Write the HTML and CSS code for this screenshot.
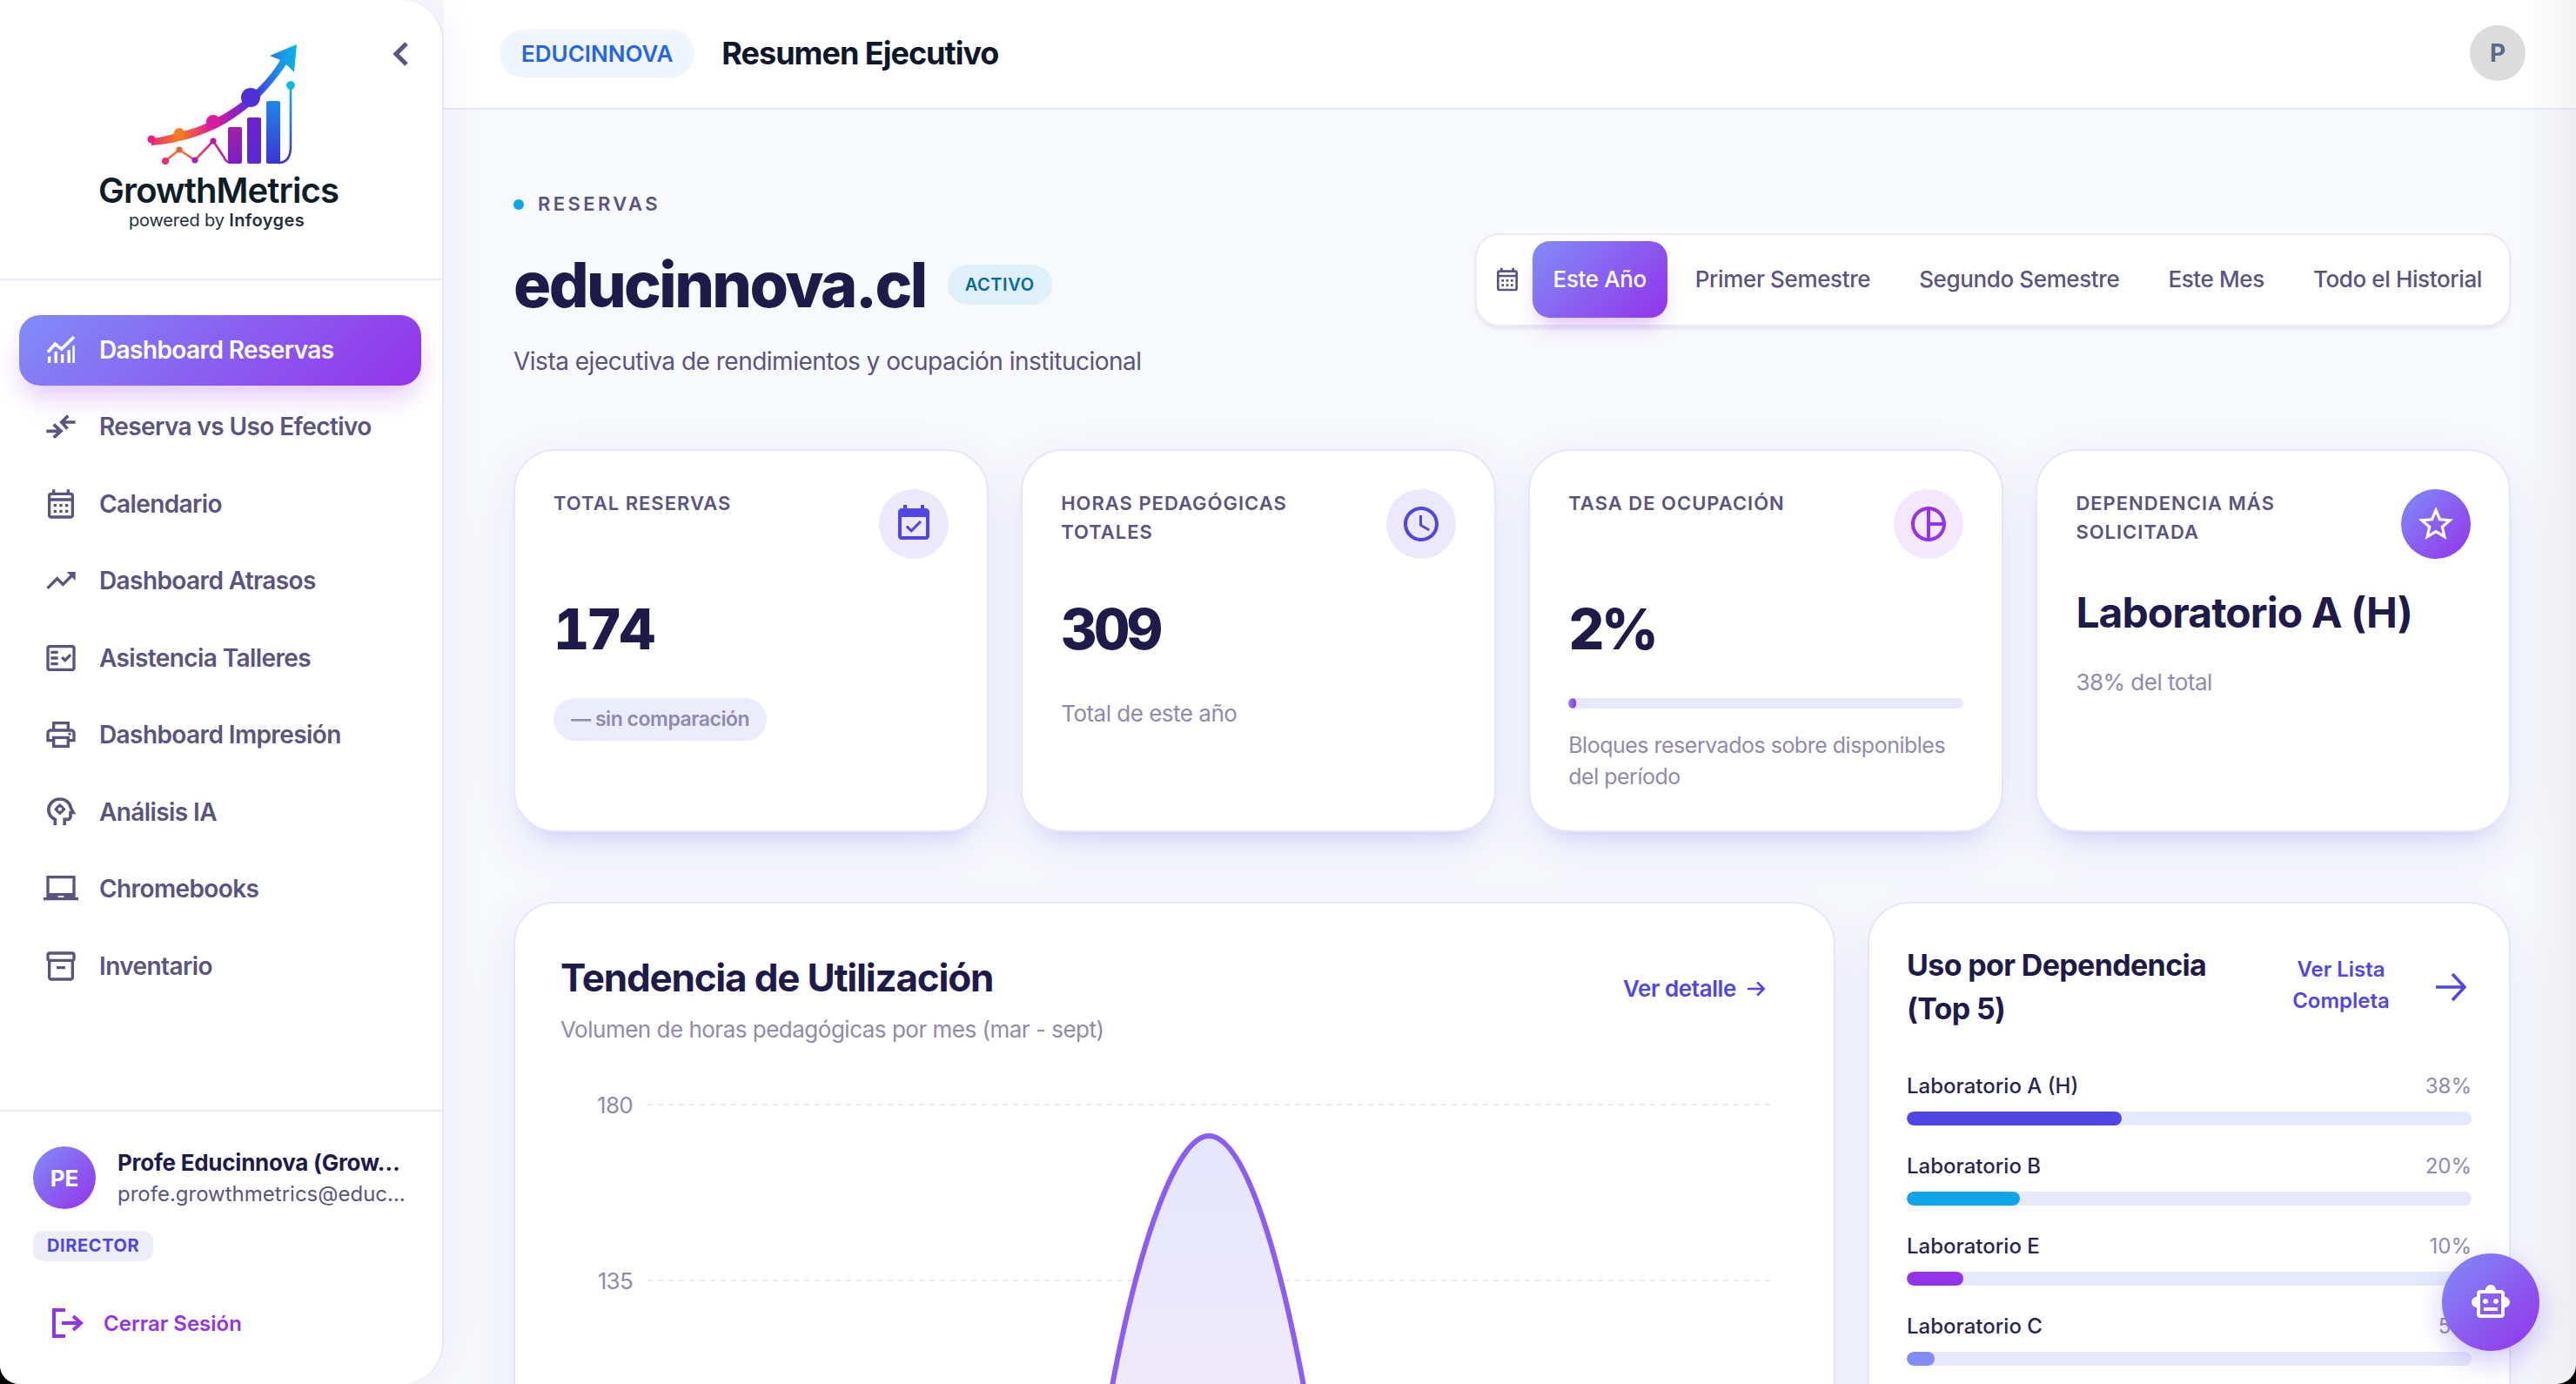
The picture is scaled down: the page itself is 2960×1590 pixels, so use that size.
FILE: index.html
```html
<!DOCTYPE html>
<html lang="es">
<head>
<meta charset="utf-8">
<title>GrowthMetrics - Resumen Ejecutivo</title>
<link rel="stylesheet" href="styles.css">
</head>
<body>
<div class="app">
  <aside class="sidebar">
    <div class="brand">
      <svg class="chevron" viewBox="0 0 24 32"><path d="M18 4 6 16l12 12"/></svg>
      <svg class="logo-mark" viewBox="165 44 176 148">
        <defs>
          <linearGradient id="lg" gradientUnits="userSpaceOnUse" x1="170" y1="0" x2="340" y2="0">
            <stop offset="0" stop-color="#ec1f80"/><stop offset=".2" stop-color="#f47b20"/><stop offset=".43" stop-color="#e0189a"/><stop offset=".6" stop-color="#8a22cc"/><stop offset=".72" stop-color="#4338dc"/><stop offset=".88" stop-color="#1e90e8"/><stop offset="1" stop-color="#06b6e8"/>
          </linearGradient>
          <linearGradient id="b1" x1="0" y1="0" x2="0" y2="1"><stop offset="0" stop-color="#a31fa8"/><stop offset="1" stop-color="#7a1fc4"/></linearGradient>
          <linearGradient id="b2" x1="0" y1="0" x2="0" y2="1"><stop offset="0" stop-color="#6a22cc"/><stop offset="1" stop-color="#5a2ad0"/></linearGradient>
          <linearGradient id="b3" x1="0" y1="0" x2="0" y2="1"><stop offset="0" stop-color="#1e88e8"/><stop offset="1" stop-color="#3b34d6"/></linearGradient>
          <linearGradient id="b4" x1="0" y1="0" x2="0" y2="1"><stop offset="0" stop-color="#06b6e8"/><stop offset="1" stop-color="#3b34d6"/></linearGradient>
        </defs>
        <path fill="url(#lg)" d="M173 159c11-1 22-4 32-7 13-3 26-7 38-14 15-7 30-17 43-28 14-12 27-27 35-41l-12-5 31-13-3 32-9-9c-10 15-22 29-35 42-14 12-30 24-47 32-13 6-27 11-41 14-10 3-21 4-32 5z"/>
        <circle cx="173" cy="160" r="4.500" fill="#ec1f80"/><circle cx="205" cy="153" r="6" fill="#f47b20"/><circle cx="244" cy="140" r="8" fill="#d81b9c"/><circle cx="287" cy="112" r="11" fill="#4f2fd8"/>
        <path class="thin" stroke="url(#lg)" d="M189 185 205 172 223 184 244 162 256 180Q259 187 264 187"/>
        <circle cx="189" cy="185" r="4" fill="#ec2a78"/><circle cx="205" cy="172" r="3.600" fill="#ee5a3c"/><circle cx="223" cy="184" r="3.600" fill="#a21fd0"/><circle cx="244" cy="162" r="3.600" fill="#c01a9c"/>
        <rect x="261" y="146" width="16" height="42" rx="2" fill="url(#b1)"/><rect x="283" y="135" width="16" height="53" rx="2" fill="url(#b2)"/><rect x="305" y="116" width="16" height="72" rx="2" fill="url(#b3)"/>
        <path class="thin" stroke="url(#b4)" d="M333 98V168Q333 187 319 187"/>
        <circle cx="333" cy="98" r="4.800" fill="#06b6e8"/>
      </svg>
      <div class="logo-name">GrowthMetrics</div>
      <div class="logo-sub">powered by <b>Infoyges</b></div>
    </div>
    <nav class="nav">
      <a class="nav-item is-active"><svg class="nav-icon" viewBox="0 0 24 24"><path d="M3 21v-4.500h2V21zM7.500 21v-8h2v8zM12 21v-6h2v6zM16.500 21v-9h2v9zM20 21V9h1.500v12z"/><path class="ico-line" d="M3 13.500 8 8l4.500 3.500L21 3"/></svg>Dashboard Reservas</a>
      <a class="nav-item"><svg class="nav-icon" viewBox="0 0 24 24"><path class="ico-line" d="M2 15.200h9M7 10.600l5 4.600-5 4.400M22 9h-9M17 4.600 12.500 9l4 4.600"/></svg>Reserva vs Uso Efectivo</a>
      <a class="nav-item"><svg class="nav-icon" viewBox="0 0 24 24"><path d="M19 4h-1V2h-2v2H8V2H6v2H5c-1.110 0-1.990.9-1.990 2L3 20c0 1.100.89 2 2 2h14c1.100 0 2-.9 2-2V6c0-1.100-.9-2-2-2zm0 16H5V10h14v10zm0-12H5V6h14v2zM9 14H7v-2h2v2zm4 0h-2v-2h2v2zm4 0h-2v-2h2v2zm-8 4H7v-2h2v2zm4 0h-2v-2h2v2zm4 0h-2v-2h2v2z"/></svg>Calendario</a>
      <a class="nav-item"><svg class="nav-icon" viewBox="0 0 24 24"><path d="M16 6l2.290 2.290-4.880 4.880-4-4L2 16.590 3.410 18l6-6 4 4 6.300-6.290L22 12V6z"/></svg>Dashboard Atrasos</a>
      <a class="nav-item"><svg class="nav-icon" viewBox="0 0 24 24"><path d="M20 3H4c-1.100 0-2 .9-2 2v14c0 1.100.9 2 2 2h16c1.100 0 2-.9 2-2V5c0-1.100-.9-2-2-2zm0 16H4V5h16v14z"/><path d="M19.410 10.420 17.990 9l-3.170 3.170-1.410-1.420L12 12.160 14.820 15zM5 7h5v2H5zM5 11h5v2H5zM5 15h5v2H5z"/></svg>Asistencia Talleres</a>
      <a class="nav-item"><svg class="nav-icon" viewBox="0 0 24 24"><path d="M19 8h-1V3H6v5H5c-1.660 0-3 1.340-3 3v6h4v4h12v-4h4v-6c0-1.660-1.340-3-3-3zM8 5h8v3H8V5zm8 12v2H8v-4h8v2zm2-2v-2H6v2H4v-4c0-.55.45-1 1-1h14c.55 0 1 .45 1 1v4h-2z"/><circle cx="18" cy="11.500" r="1"/></svg>Dashboard Impresión</a>
      <a class="nav-item"><svg class="nav-icon" viewBox="0 0 24 24"><path class="ico-line" d="M8 21v-4C5.200 15.700 3.500 13.300 3.500 10.500 3.500 6.400 7 3 11.300 3c3.900 0 6.900 2.600 7.500 6l1.700 3.300h-1.900V15c0 1.100-.9 2-2 2h-2.100v4"/><circle class="ico-line thin-ico" cx="11.300" cy="10" r="2.200"/><path class="ico-line thin-ico" d="M11.300 6.300v1.500M11.300 12.200v1.500M7.600 10h1.500M13.500 10H15"/></svg>Análisis IA</a>
      <a class="nav-item"><svg class="nav-icon" viewBox="0 0 24 24"><path d="M22 18V3H2v15H0v2h24v-2h-2zm-8 0h-4v-1h4v1zm6-3H4V5h16v10z"/></svg>Chromebooks</a>
      <a class="nav-item"><svg class="nav-icon" viewBox="0 0 24 24"><path d="M20 2H4c-1 0-2 .9-2 2v3.010c0 .72.43 1.340 1 1.690V20c0 1.100 1.100 2 2 2h14c.9 0 2-.9 2-2V8.700c.57-.35 1-.97 1-1.690V4c0-1.100-1-2-2-2zm-1 18H5V9h14v11zm1-13H4V4h16v3zM9 12h6v2H9z"/></svg>Inventario</a>
    </nav>
    <div class="user">
      <div class="user-row">
        <div class="user-avatar">PE</div>
        <div class="user-meta">
          <div class="user-name">Profe Educinnova (Grow…</div>
          <div class="user-mail">profe.growthmetrics@educ…</div>
        </div>
      </div>
      <span class="user-role">DIRECTOR</span>
      <a class="logout"><svg class="logout-icon" viewBox="0 0 40 40"><path d="M17 5H4v30h13M13 20h21M26 12l9 8-9 8"/></svg>Cerrar Sesión</a>
    </div>
  </aside>

  <div class="main">
    <header class="topbar">
      <span class="chip">EDUCINNOVA</span>
      <h2 class="page-title">Resumen Ejecutivo</h2>
      <div class="top-avatar">P</div>
    </header>
    <main class="content">
      <section class="hero">
        <div class="hero-text">
          <div class="eyebrow"><i class="eyebrow-dot"></i>RESERVAS</div>
          <div class="hero-title"><h1>educinnova.cl</h1><span class="status">ACTIVO</span></div>
          <p class="hero-sub">Vista ejecutiva de rendimientos y ocupación institucional</p>
        </div>
        <div class="filter">
          <svg class="filter-icon" viewBox="0 0 24 24"><path d="M19 4h-1V2h-2v2H8V2H6v2H5c-1.110 0-1.990.9-1.990 2L3 20c0 1.100.89 2 2 2h14c1.100 0 2-.9 2-2V6c0-1.100-.9-2-2-2zm0 16H5V10h14v10zm0-12H5V6h14v2zM9 14H7v-2h2v2zm4 0h-2v-2h2v2zm4 0h-2v-2h2v2zm-8 4H7v-2h2v2zm4 0h-2v-2h2v2zm4 0h-2v-2h2v2z"/></svg>
          <button class="filter-btn is-active">Este Año</button>
          <button class="filter-btn">Primer Semestre</button>
          <button class="filter-btn">Segundo Semestre</button>
          <button class="filter-btn">Este Mes</button>
          <button class="filter-btn">Todo el Historial</button>
        </div>
      </section>

      <section class="kpis">
        <article class="kpi">
          <div class="kpi-head"><span class="kpi-label">TOTAL RESERVAS</span><span class="kpi-icon tone-indigo"><svg viewBox="0 0 24 24"><path d="M16.530 11.060 15.470 10l-4.880 4.880-2.120-2.120-1.060 1.060L10.590 17l5.940-5.940zM19 3h-1V1h-2v2H8V1H6v2H5c-1.110 0-1.990.9-1.990 2L3 19c0 1.100.89 2 2 2h14c1.100 0 2-.9 2-2V5c0-1.100-.9-2-2-2zm0 16H5V8h14v11z"/></svg></span></div>
          <div class="kpi-value">174</div>
          <span class="kpi-pill">— sin comparación</span>
        </article>
        <article class="kpi">
          <div class="kpi-head"><span class="kpi-label">HORAS PEDAGÓGICAS TOTALES</span><span class="kpi-icon tone-indigo"><svg viewBox="0 0 24 24"><path d="M11.990 2C6.470 2 2 6.480 2 12s4.470 10 9.990 10C17.520 22 22 17.520 22 12S17.520 2 11.990 2zM12 20c-4.420 0-8-3.580-8-8s3.580-8 8-8 8 3.580 8 8-3.580 8-8 8zm.5-13H11v6l5.250 3.150.75-1.230-4.500-2.670z"/></svg></span></div>
          <div class="kpi-value">309</div>
          <p class="kpi-note">Total de este año</p>
        </article>
        <article class="kpi">
          <div class="kpi-head"><span class="kpi-label">TASA DE OCUPACIÓN</span><span class="kpi-icon tone-purple"><svg viewBox="0 0 24 24"><path d="M12 2C6.490 2 2 6.490 2 12s4.490 10 10 10 10-4.490 10-10S17.510 2 12 2zm7.930 9H13V4.070c3.610.45 6.480 3.320 6.930 6.930zM4 12c0-4.070 3.060-7.440 7-7.930v15.860c-3.940-.49-7-3.860-7-7.930zm9 7.930V13h6.930c-.45 3.610-3.320 6.480-6.930 6.930z"/></svg></span></div>
          <div class="kpi-value">2%</div>
          <div class="kpi-progress"><div class="kpi-progress-fill" style="width:2%"></div></div>
          <p class="kpi-note kpi-note-gap">Bloques reservados sobre disponibles del período</p>
        </article>
        <article class="kpi">
          <div class="kpi-head"><span class="kpi-label">DEPENDENCIA MÁS SOLICITADA</span><span class="kpi-icon tone-solid"><svg viewBox="0 0 24 24"><path d="M22 9.240l-7.190-.62L12 2 9.190 8.630 2 9.240l5.460 4.730L5.820 21 12 17.270 18.180 21l-1.630-7.030L22 9.240zM12 15.400l-3.760 2.270 1-4.280-3.320-2.880 4.380-.38L12 6.100l1.710 4.040 4.380.38-3.320 2.880 1 4.280L12 15.400z"/></svg></span></div>
          <div class="kpi-text-value">Laboratorio A (H)</div>
          <p class="kpi-note">38% del total</p>
        </article>
      </section>

      <section class="lower">
        <article class="panel panel-chart">
          <div class="chart-head">
            <div>
              <h3 class="chart-title">Tendencia de Utilización</h3>
              <p class="chart-sub">Volumen de horas pedagógicas por mes (mar - sept)</p>
            </div>
            <a class="link-detail">Ver detalle<svg viewBox="0 0 24 24"><path d="M4 12h15M13 6l6 6-6 6"/></svg></a>
          </div>
          <svg class="chart" viewBox="644 1220 1420 380">
            <defs><linearGradient id="area" x1="0" y1="0" x2="0" y2="1"><stop offset="0" stop-color="#e5e6fd"/><stop offset="1" stop-color="#efeafb"/></linearGradient></defs>
            <text class="axis" x="727" y="1277">180</text>
            <text class="axis" x="727" y="1479">135</text>
            <path class="grid" d="M744 1267H2035M744 1469H2035"/>
            <path fill="url(#area)" d="M1278 1590C1310 1420 1353 1303 1389 1303C1427 1303 1466 1420 1498 1590Z"/>
            <path class="grid" d="M1310 1469H1460"/>
            <path class="trend" d="M1278 1590C1310 1420 1353 1303 1389 1303C1427 1303 1466 1420 1498 1590"/>
          </svg>
        </article>
        <article class="panel panel-usage">
          <div class="usage-head">
            <h3 class="usage-title">Uso por Dependencia (Top 5)</h3>
            <a class="link-list">Ver Lista Completa</a>
            <svg class="link-arrow" viewBox="0 0 48 48"><path d="M7 24h33M26 9l14 15-14 15"/></svg>
          </div>
          <div class="usage-row">
            <div class="usage-line"><span>Laboratorio A (H)</span><em>38%</em></div>
            <div class="usage-bar"><div class="fill-a" style="width:38%"></div></div>
          </div>
          <div class="usage-row">
            <div class="usage-line"><span>Laboratorio B</span><em>20%</em></div>
            <div class="usage-bar"><div class="fill-b" style="width:20%"></div></div>
          </div>
          <div class="usage-row">
            <div class="usage-line"><span>Laboratorio E</span><em>10%</em></div>
            <div class="usage-bar"><div class="fill-c" style="width:10%"></div></div>
          </div>
          <div class="usage-row">
            <div class="usage-line"><span>Laboratorio C</span><em>5%</em></div>
            <div class="usage-bar"><div class="fill-d" style="width:5%"></div></div>
          </div>
        </article>
      </section>
    </main>
    <button class="fab" aria-label="Asistente"><svg viewBox="0 0 24 24"><path d="M20 9V7c0-1.100-.9-2-2-2h-3c0-1.660-1.340-3-3-3S9 3.340 9 5H6c-1.100 0-2 .9-2 2v2c-1.660 0-3 1.340-3 3s1.340 3 3 3v4c0 1.100.9 2 2 2h12c1.100 0 2-.9 2-2v-4c1.660 0 3-1.340 3-3s-1.340-3-3-3zm-2 10H6V7h12v12zm-9-6c-.83 0-1.500-.67-1.500-1.500S8.170 10 9 10s1.500.67 1.500 1.500S9.830 13 9 13zm7.500-1.500c0 .83-.67 1.500-1.500 1.500s-1.500-.67-1.500-1.500.67-1.500 1.500-1.500 1.500.67 1.500 1.500zM8 15h8v2H8v-2z"/></svg></button>
  </div>
</div>
</body>
</html>
```
FILE: styles.css
```css
* { box-sizing: border-box; }
html, body { margin: 0; height: 100%; background: #000; overflow: hidden; }
body { font-family: Inter, "Liberation Sans", sans-serif; color: #1e1b4b; }
h1, h2, h3, p { margin: 0; }
a { text-decoration: none; }
button { font: inherit; border: 0; background: none; padding: 0; }

.app { display: flex; width: 2960px; height: 1590px; background: #f8f9fc; border-radius: 0 0 22px 22px; overflow: hidden; }

/* Sidebar */
.sidebar { position: relative; z-index: 2; flex: 0 0 510px; width: 510px; min-width: 0; height: 1590px; display: flex; flex-direction: column; background: #fff; border-right: 2px solid #e5e7fc; border-radius: 0 48px 48px 0; box-shadow: 8px 0 44px rgba(79, 70, 229, .06); }
.brand { position: relative; height: 322px; flex: none; display: flex; flex-direction: column; align-items: center; padding-top: 44px; border-bottom: 2px solid #e8e9fb; }
.chevron { position: absolute; left: 449px; top: 46px; width: 24px; height: 32px; fill: none; stroke: #5a5480; stroke-width: 5; }
.logo-mark { width: 176px; height: 148px; flex: none; }
.thin { fill: none; stroke-width: 2.600; }
.logo-name { margin: 3px 6px 0 0; font-size: 40px; line-height: 48px; font-weight: 600; letter-spacing: -.9px; color: #0f1d26; }
.logo-sub { margin: -2px 10px 0 0; font-size: 20px; line-height: 25px; letter-spacing: -.15px; color: #26303a; }
.logo-sub b { font-weight: 600; letter-spacing: .4px; }

.nav { flex: 1; display: flex; flex-direction: column; gap: 7.500px; padding: 40px 24px 0 22px; }
.nav-item { display: flex; align-items: center; gap: 24px; height: 81px; padding: 0 0 2px 28px; border-radius: 24px; font-size: 28px; font-weight: 600; letter-spacing: -.6px; color: #5a5480; }
.nav-item.is-active { color: #fff; background: linear-gradient(135deg, #818cf8, #9333ea); box-shadow: 0 16px 32px -6px rgba(147, 51, 234, .3); }
.nav-icon { width: 40px; height: 40px; flex: none; fill: currentColor; }
.ico-line { fill: none; stroke: currentColor; stroke-width: 2.200; }
.thin-ico { stroke-width: 1.800; }

.user { flex: none; height: 315px; padding: 39px 38px 0; border-top: 2px solid #e8e9fb; }
.user-row { display: flex; align-items: center; gap: 25px; }
.user-avatar { width: 72px; height: 72px; flex: none; display: flex; align-items: center; justify-content: center; border-radius: 50%; background: linear-gradient(135deg, #818cf8, #9333ea); color: #fff; font-size: 26px; font-weight: 700; }
.user-meta { padding-top: 2px; white-space: nowrap; }
.user-name { font-size: 26px; line-height: 36px; font-weight: 700; letter-spacing: -.25px; color: #1e1b4b; }
.user-mail { font-size: 24px; line-height: 36px; color: #5a5480; }
.user-role { display: inline-block; margin-top: 24px; padding: 0 16px; height: 35px; line-height: 35px; border-radius: 12px; background: #eeeefb; color: #4f46e5; font-size: 20px; font-weight: 700; letter-spacing: .6px; }
.logout { display: flex; align-items: center; gap: 21px; margin-top: 51px; padding-left: 20px; font-size: 24px; font-weight: 600; color: #9333ea; }
.logout-icon { width: 40px; height: 40px; fill: none; stroke: currentColor; stroke-width: 4; }

/* Main */
.main { position: relative; flex: 1; min-width: 0; height: 1590px; overflow: hidden; }
.main::after { content: ""; position: absolute; top: 0; right: 0; bottom: 0; width: 60px; background: linear-gradient(90deg, rgba(0, 0, 0, 0), rgba(0, 0, 0, .045)); pointer-events: none; }
.topbar { display: flex; align-items: center; height: 126px; padding: 0 58px 2px 64px; background: #fff; border-bottom: 2px solid #e4e8f0; }
.chip { display: flex; align-items: center; height: 55px; padding: 0 25px; border-radius: 28px; background: #eff6ff; color: #2563eb; font-size: 26px; font-weight: 600; }
.page-title { margin-left: 31px; font-size: 36px; font-weight: 700; letter-spacing: -1px; color: #0f172a; }
.top-avatar { margin-left: auto; width: 64px; height: 64px; display: flex; align-items: center; justify-content: center; border-radius: 50%; background: #dcdcdc; color: #5b6b8a; font-size: 28px; font-weight: 700; }

.content { padding: 92px 75px 0 80px; }
.hero { display: flex; justify-content: space-between; align-items: flex-start; }
.eyebrow { display: flex; align-items: center; gap: 16px; font-size: 22px; line-height: 33px; font-weight: 600; letter-spacing: 3.400px; color: #5a5480; }
.eyebrow-dot { width: 12px; height: 12px; border-radius: 50%; background: #0ea5e9; }
.hero-title { display: flex; align-items: center; gap: 25px; margin-top: 33px; }
.hero-title h1 { font-size: 72px; line-height: 86px; font-weight: 800; letter-spacing: -2.600px; color: #1e1b4b; }
.status { height: 46px; line-height: 46px; padding: 0 20px; border-radius: 23px; background: #e0f0fb; color: #0369a1; font-size: 20px; font-weight: 600; letter-spacing: .6px; }
.hero-sub { margin-top: 23px; font-size: 28px; line-height: 45px; letter-spacing: -.5px; color: #5a5480; }

.filter { display: flex; align-items: stretch; margin-top: 50px; height: 107px; padding: 7px 7px 8px 19px; gap: 8px; background: #fff; border: 2px solid #ebebf0; border-radius: 28px; box-shadow: 0 3px 4px rgba(30, 27, 75, .08); }
.filter-icon { width: 32px; height: 32px; align-self: center; margin-right: 5px; fill: #5a5480; }
.filter-btn { padding: 0 24px 2px; border-radius: 20px; font-size: 26px; font-weight: 500; letter-spacing: -.38px; color: #5a5480; white-space: nowrap; }
.filter-btn.is-active { color: #fff; background: linear-gradient(135deg, #818cf8, #9333ea); box-shadow: 0 14px 24px -8px rgba(147, 51, 234, .35); }

/* KPI */
.kpis { display: grid; grid-template-columns: repeat(4, minmax(0, 1fr)); gap: 37.500px; margin-top: 78px; }
.kpi { padding: 44px; background: #fff; border: 2px solid #e4e6fc; border-radius: 48px; box-shadow: 0 20px 60px rgba(79, 70, 229, .09), 0 22px 30px -22px rgba(79, 70, 229, .24); }
.kpi-head { display: flex; justify-content: space-between; align-items: flex-start; gap: 16px; height: 80px; }
.kpi-label { font-size: 22px; line-height: 33px; font-weight: 600; letter-spacing: 1px; color: #5a5480; }
.kpi-icon { flex: none; display: flex; align-items: center; justify-content: center; width: 80px; height: 80px; border-radius: 50%; }
.kpi-icon svg { width: 48px; height: 48px; fill: currentColor; }
.tone-indigo { background: #ece9fc; color: #4f46e5; }
.tone-purple { background: #f3e8fd; color: #9333ea; }
.tone-solid { background: linear-gradient(135deg, #818cf8, #9333ea); color: #fff; }
.kpi-value { margin-top: 42px; font-size: 64px; line-height: 77px; font-weight: 800; font-variant-numeric: tabular-nums; letter-spacing: -3.500px; color: #1e1b4b; }
.kpi-text-value { margin-top: 33px; font-size: 48px; line-height: 58px; font-weight: 700; letter-spacing: -.95px; color: #1e1b4b; }
.kpi-pill { display: inline-block; margin-top: 41px; height: 49px; line-height: 49px; padding: 0 20px; border-radius: 25px; background: #ecedfc; color: #8f8aae; font-size: 23px; font-weight: 600; letter-spacing: -.45px; }
.kpi-note { margin-top: 41px; font-size: 26px; line-height: 36px; letter-spacing: -.5px; color: #8f8aae; }
.kpi-text-value + .kpi-note { margin-top: 33px; }
.kpi-progress { margin-top: 41px; height: 12px; border-radius: 6px; background: #e6e8fd; overflow: hidden; }
.kpi-progress-fill { height: 100%; border-radius: 6px; background: linear-gradient(90deg, #818cf8, #9333ea); }
.kpi-note.kpi-note-gap { margin-top: 24px; font-size: 25px; }

/* Lower panels */
.lower { display: grid; grid-template-columns: minmax(0, 1fr) 739px; gap: 37px; align-items: start; margin-top: 80px; }
.panel { height: 700px; background: #fff; border: 2px solid #e4e6fc; border-radius: 48px; box-shadow: 0 20px 60px rgba(79, 70, 229, .09); }
.panel-chart { padding: 59px 0 0 52px; }
.chart-head { display: flex; justify-content: space-between; align-items: flex-start; padding-right: 74px; }
.chart-title { font-size: 44px; line-height: 53px; font-weight: 700; letter-spacing: -1.200px; color: #1e1b4b; }
.chart-sub { margin-top: 15px; font-size: 26px; line-height: 36px; letter-spacing: -.5px; color: #8f8aae; }
.link-detail { display: flex; align-items: center; gap: 8px; margin-top: 21px; font-size: 26px; line-height: 36px; font-weight: 600; letter-spacing: -.4px; color: #4f46e5; }
.link-detail svg { width: 30px; height: 30px; fill: none; stroke: currentColor; stroke-width: 2; }
.chart { display: block; width: 1420px; height: 380px; margin-top: 21px; }
.axis { font-family: Inter, "Liberation Sans", sans-serif; font-size: 26px; letter-spacing: -.7px; fill: #8f8aae; text-anchor: end; }
.grid { fill: none; stroke: #e6e8fd; stroke-width: 2; stroke-dasharray: 6 6; }
.trend { fill: none; stroke: #8b5cf6; stroke-width: 6; }

.panel-usage { padding: 46px 43px 0; }
.usage-head { display: flex; align-items: center; margin-bottom: 46px; }
.usage-title { flex: 1; padding-right: 60px; font-size: 34px; line-height: 50px; font-weight: 700; letter-spacing: -.65px; color: #1e1b4b; }
.link-list { flex: none; width: 140px; margin-top: -4px; text-align: center; font-size: 24px; line-height: 36px; font-weight: 600; color: #4f46e5; }
.link-arrow { flex: none; width: 48px; height: 48px; margin-left: 32px; fill: none; stroke: #4f46e5; stroke-width: 3.500; }
.usage-row { margin-bottom: 29px; }
.usage-line { display: flex; justify-content: space-between; font-size: 24px; line-height: 36px; font-weight: 500; color: #2a2550; }
.usage-line em { font-style: normal; font-weight: 400; color: #8f8aae; }
.usage-bar { height: 16px; margin-top: 11px; border-radius: 8px; background: #e6e8fd; overflow: hidden; }
.usage-bar div { height: 100%; border-radius: 8px; }
.fill-a { background: #4f46e5; }
.fill-b { background: #0ea5e9; }
.fill-c { background: #9333ea; }
.fill-d { background: #818cf8; }

.fab { position: absolute; z-index: 3; right: 42px; bottom: 38px; width: 112px; height: 112px; display: flex; align-items: center; justify-content: center; border-radius: 50%; background: linear-gradient(135deg, #818cf8, #9333ea); box-shadow: 0 12px 32px rgba(99, 70, 229, .3); }
.fab svg { width: 48px; height: 48px; fill: #fff; }
```
